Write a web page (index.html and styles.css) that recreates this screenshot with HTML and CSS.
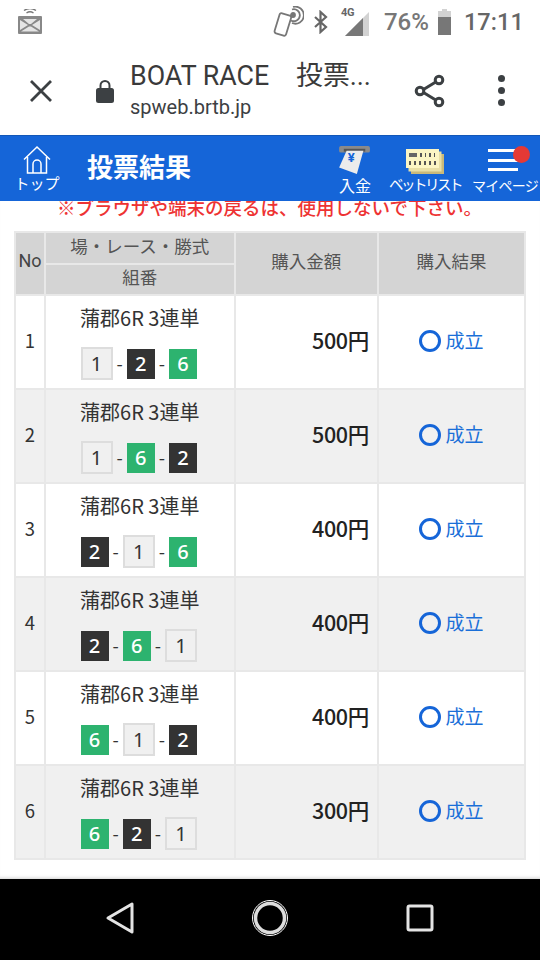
FILE: index.html
```html
<!DOCTYPE html>
<html lang="ja">
<head>
<meta charset="utf-8">
<title>投票結果</title>
<link rel="stylesheet" href="styles.css">
</head>
<body>
<div class="phone">
  <div class="status">
    <svg class="cast" width="24" height="26" viewBox="2 4 24 26"><g fill="none" stroke="#777" stroke-width="1.4"><path d="M8 5.500q6-4 12 0M10.500 8q3.500-2.500 7 0"/></g><rect x="2" y="11" width="24" height="18" rx="1" fill="#888"/><path d="M4 15l8 5-8 5zM24 15l-8 5 8 5zM7 14h14l-6 5h-2zM5 26.500l8-5h2l8 5z" fill="#e4e4e4"/></svg>
    <span class="status-right">
      <svg width="32" height="32" viewBox="0 0 32 32"><g fill="none" stroke="#777" stroke-width="1.800"><rect x="5" y="8" width="12" height="21" rx="2" transform="rotate(17 11 18)"/><circle cx="21" cy="9" r="2" fill="#777"/><path d="M20 3.500a6 6 0 1 1 -1 11M21 1a8.500 8.500 0 1 1 -1 16"/></g></svg>
      <svg class="bt" width="16" height="24" viewBox="0 0 16 24"><path d="M2 7l11 10-5.500 5V2L13 7 2 17" fill="none" stroke="#666" stroke-width="2.200"/></svg>
      <span class="signal"><b class="lte">4G</b><svg width="24" height="24" viewBox="0 0 24 24"><path d="M0 24L24 0v24z" fill="#d2d2d2"/><path d="M0 24L18 6v18z" fill="#777"/></svg></span>
      <span class="pct">76%</span>
      <svg width="16" height="26" viewBox="0 0 16 26"><path d="M5 0h5v2h4v24H1V2h4z" fill="#d2d2d2"/><path d="M1 8h13v18H1z" fill="#777"/></svg>
      <span class="clock">17:11</span>
    </span>
  </div>
  <div class="toolbar">
    <svg class="close" width="24" height="24" viewBox="0 0 24 24"><path d="M2 2l20 20M22 2L2 22" stroke="#3c4043" stroke-width="2.800" fill="none"/></svg>
    <svg class="lock" width="20" height="24" viewBox="0 0 20 24"><path d="M5.500 10V6.500a4.500 4.500 0 0 1 9 0V10" fill="none" stroke="#3c4043" stroke-width="2"/><rect x="1" y="9" width="18" height="15" rx="2.500" fill="#3c4043"/></svg>
    <div class="url">
      <div class="page-title">BOAT RACE　投票...</div>
      <div class="domain">spweb.brtb.jp</div>
    </div>
    <svg class="share" width="32" height="34" viewBox="0 0 32 34"><g fill="none" stroke="#3c4043" stroke-width="3"><path d="M7 17L25 6M7 17l18 11"/><circle cx="25" cy="6" r="3.800" fill="#fff"/><circle cx="25" cy="28" r="3.800" fill="#fff"/><circle cx="6" cy="17" r="3.800" fill="#fff"/></g></svg>
    <span class="menu-dots"><i></i><i></i><i></i></span>
  </div>
  <header class="bar">
    <div class="nav-top">
      <svg width="30" height="30" viewBox="0 0 30 30"><g fill="none" stroke="#fff" stroke-width="1.500"><path d="M2 14.500L15 2l13 12.500"/><path d="M5.500 12v16h19V12"/><path d="M11 28v-9a4 4 0 0 1 8 0v9"/></g></svg>
      <span>トップ</span>
    </div>
    <h1>投票結果</h1>
    <div class="nav-item nav-deposit">
      <svg width="34" height="28" viewBox="0 0 34 30"><rect x="0" y="0" width="33" height="7" rx="2" fill="#8a8a8a"/><rect x="5" y="3" width="23" height="3" fill="#555"/><path d="M8 5h18l-7 25L0 23z" fill="#ececec"/><text x="13" y="17" class="yen">¥</text></svg>
      <span>入金</span>
    </div>
    <div class="nav-item nav-bet">
      <svg width="38" height="25" viewBox="0 0 38 25"><rect x="5" y="5" width="33" height="20" fill="#c9b97a"/><rect x="2.500" y="2.500" width="33" height="20" fill="#e8dfa6"/><rect x="0" y="0" width="33" height="19" fill="#fbf5c4"/><rect x="3" y="4" width="8" height="4" fill="#666"/><path d="M14 4h2v4h-2zM19 4h1v4h-1zM23 4h2v4h-2zM28 4h1v4h-1zM3 12h2v4H3zM8 12h2v4H8zM13 12h2v4h-2zM18 12h2v4h-2zM23 12h2v4h-2zM28 12h2v4h-2z" fill="#555"/></svg>
      <span>ベットリスト</span>
    </div>
    <div class="nav-item nav-my">
      <span class="burger"><i></i><i></i><i></i><em class="dot"></em></span>
      <span>マイページ</span>
    </div>
  </header>
  <main class="content">
    <p class="note">※ブラウザや端末の戻るは、使用しないで下さい。</p>
    <table class="results">
      <colgroup><col class="c1"><col class="c2"><col class="c3"><col class="c4"></colgroup>
      <thead>
        <tr class="h1r"><th rowspan="2" class="no">No</th><th>場・レース・勝式</th><th rowspan="2">購入金額</th><th rowspan="2">購入結果</th></tr>
        <tr class="h2r"><th>組番</th></tr>
      </thead>
      <tbody>
        <tr><td>1</td><td class="race"><div>蒲郡6R 3連単</div><div class="combo"><b class="w">1</b>-<b class="k">2</b>-<b class="g">6</b></div></td><td class="amt">500円</td><td class="ok"><span class="ring"></span>成立</td></tr>
        <tr><td>2</td><td class="race"><div>蒲郡6R 3連単</div><div class="combo"><b class="w">1</b>-<b class="g">6</b>-<b class="k">2</b></div></td><td class="amt">500円</td><td class="ok"><span class="ring"></span>成立</td></tr>
        <tr><td>3</td><td class="race"><div>蒲郡6R 3連単</div><div class="combo"><b class="k">2</b>-<b class="w">1</b>-<b class="g">6</b></div></td><td class="amt">400円</td><td class="ok"><span class="ring"></span>成立</td></tr>
        <tr><td>4</td><td class="race"><div>蒲郡6R 3連単</div><div class="combo"><b class="k">2</b>-<b class="g">6</b>-<b class="w">1</b></div></td><td class="amt">400円</td><td class="ok"><span class="ring"></span>成立</td></tr>
        <tr><td>5</td><td class="race"><div>蒲郡6R 3連単</div><div class="combo"><b class="g">6</b>-<b class="w">1</b>-<b class="k">2</b></div></td><td class="amt">400円</td><td class="ok"><span class="ring"></span>成立</td></tr>
        <tr><td>6</td><td class="race"><div>蒲郡6R 3連単</div><div class="combo"><b class="g">6</b>-<b class="k">2</b>-<b class="w">1</b></div></td><td class="amt">300円</td><td class="ok"><span class="ring"></span>成立</td></tr>
      </tbody>
    </table>
  </main>
  <nav class="sysnav">
    <svg width="30" height="34" viewBox="0 0 30 34"><path d="M3 17L27 3v28z" fill="none" stroke="#e4e4e4" stroke-width="3" stroke-linejoin="round"/></svg>
    <svg width="38" height="38" viewBox="0 0 38 38"><circle cx="19" cy="19" r="14.500" fill="none" stroke="#ddd" stroke-width="3.500"/><circle cx="19" cy="19" r="17.500" fill="none" stroke="#fff" stroke-width="1"/></svg>
    <svg width="28" height="28" viewBox="0 0 28 28"><rect x="2" y="2" width="24" height="24" rx="1.500" fill="none" stroke="#e4e4e4" stroke-width="3"/></svg>
  </nav>
</div>
</body>
</html>
```
FILE: styles.css
```css
* { box-sizing: border-box; }
html, body { margin: 0; padding: 0; }
body { background: #fff; font-family: "Noto Sans CJK JP", "Noto Sans", sans-serif; color: #333; }
.phone { width: 540px; height: 960px; display: flex; flex-direction: column; overflow: hidden; }

.status { height: 44px; flex: none; display: flex; align-items: center; justify-content: space-between; padding: 0 16px 0 18px; }
.status-right { display: flex; align-items: center; }
.status-right svg { flex: none; }
.bt { margin-left: 9px; }
.signal { position: relative; width: 30px; height: 24px; margin-left: 10px; display: flex; justify-content: flex-end; margin-top: 4px; }
.lte { position: absolute; left: 2px; top: -5px; font: bold 11px/12px "Roboto", sans-serif; color: #666; letter-spacing: -0.300px; }
.pct { font: 500 24px/30px "Roboto", sans-serif; color: #777; margin: 0 8px 0 15px; }
.clock { font: 500 23.500px/30px "Roboto", sans-serif; color: #666; margin-left: 11px; letter-spacing: 0.100px; }

.toolbar { height: 91px; flex: none; display: flex; align-items: center; position: relative; }
.close { margin-left: 29px; flex: none; margin-top: 2px; }
.lock { margin-left: 42px; flex: none; margin-top: 2px; }
.url { margin-left: 15px; width: 271px; color: #333; }
.page-title { font: 400 26.800px/32px "Roboto", "Noto Sans CJK JP", sans-serif; white-space: nowrap; color: #3a3a3a; }
.domain { font: 400 20px/26px "Roboto", sans-serif; color: #3c4043; margin-top: 2px; }
.share { margin-left: 13px; flex: none; margin-top: 3px; }
.menu-dots { display: flex; flex-direction: column; gap: 5px; margin-left: 52px; margin-top: 2px; }
.menu-dots i { width: 7px; height: 7px; border-radius: 50%; background: #3c4043; display: block; }

.bar { height: 66px; flex: none; position: relative; z-index: 2; background: #1565d8; color: #fff; display: flex; border-top: 1px solid #1257b8; }
.bar span { font-size: 15px; line-height: 18px; white-space: nowrap; }
.nav-top { width: 44px; margin-left: 15px; display: flex; flex-direction: column; align-items: center; padding-top: 9px; }
.nav-top span { margin-top: -1px; }
.bar h1 { margin: 0 0 0 28px; font-size: 26px; font-weight: 700; line-height: 60px; width: 251px; flex: none; }
.nav-item { display: flex; flex-direction: column; align-items: center; flex: none; }
.nav-deposit { width: 34px; padding-top: 10px; }
.nav-deposit span { margin-top: 2px; font-size: 16px; }
.nav-bet { width: 72px; margin-left: 17px; padding-top: 13px; }
.nav-bet span { margin-top: 1px; font-size: 14.500px; letter-spacing: -2.500px; }
.nav-my { width: 66px; margin-left: 11px; padding-top: 13px; }
.nav-my span:last-child { font-size: 14px; letter-spacing: -0.700px; margin-top: 1px; }
.yen { font: bold 14px "Roboto", sans-serif; fill: #1565d8; text-anchor: middle; }
.burger { position: relative; width: 34px; height: 26px; display: flex; flex-direction: column; gap: 6.500px; }
.burger i { display: block; height: 3px; background: #fff; width: 30px; }
.dot { position: absolute; left: 24.500px; top: -3px; width: 17px; height: 17px; border-radius: 50%; background: #e53935; }

.content { flex: 1; padding: 0 15px 0 14px; border-bottom: 1px solid #e2e2e2; box-shadow: inset 0 -3px 3px -2px #e4e4e4; }
.note { margin: 0; height: 30px; overflow: hidden; line-height: 12px; font-size: 18.500px; color: #e33; text-align: center; white-space: nowrap; font-weight: 500; }
.results { width: 510px; border-collapse: collapse; table-layout: fixed; font-size: 18.500px; }
.c1 { width: 30px; } .c2 { width: 189.500px; } .c3 { width: 143.500px; } .c4 { width: 147px; }
.results th, .results td { border: 2px solid #e8e8e8; padding: 0 0 5px; text-align: center; font-weight: 400; }
.results th { background: #d4d4d4; color: #555; font-size: 17.500px; line-height: 24px; }
.results th.no { font: 400 18px/24px "Roboto", sans-serif; color: #444; }
.h1r { height: 32px; } .h2r { height: 31px; }
.results tbody tr { height: 94px; }
.results tbody tr:nth-child(even) td { background: #f0f0f0; }
.results td.race { vertical-align: top; padding: 9px 0 0; font-size: 20px; color: #333; line-height: 26px; }
.combo { display: flex; align-items: center; justify-content: center; gap: 4px; margin-top: 16px; padding-right: 2px; line-height: 33px; font-size: 18px; }
.combo b { width: 28px; height: 30px; font: 500 20px/30px "Noto Sans", sans-serif; display: block; }
.combo .w { width: 32px; height: 33px; line-height: 29px; background: #f0f0f0; border: 2px solid #ddd; color: #333; font-weight: 400; }
.combo .k { background: #333; color: #fff; }
.combo .g { background: #2db36f; color: #fff; }
.results td.amt { text-align: right; padding-right: 8px; font-size: 21.500px; color: #222; font-weight: 500; letter-spacing: -0.300px; }
.results td.ok { color: #1a6fd8; font-size: 19px; }
.ring { display: inline-block; width: 22px; height: 22px; border: 3.500px solid #1565d8; border-radius: 50%; vertical-align: -4px; margin-right: 4px; }

.sysnav { height: 81px; flex: none; background: #000; position: relative; }
.sysnav svg { position: absolute; top: 22px; }
.sysnav svg:nth-child(1) { left: 105px; top: 22px; }
.sysnav svg:nth-child(2) { left: 251px; top: 20px; }
.sysnav svg:nth-child(3) { left: 406px; top: 25px; }
```
